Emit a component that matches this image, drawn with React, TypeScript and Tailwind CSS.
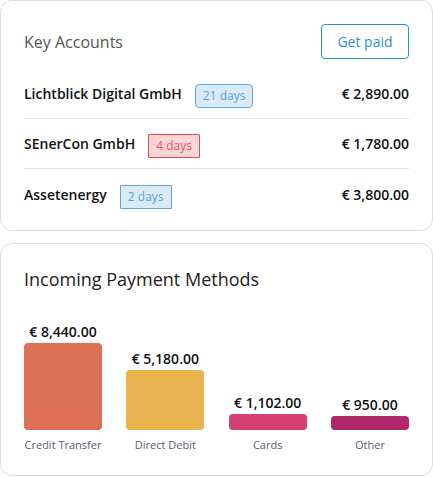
const accounts = [
  { name: "Lichtblick Digital GmbH", days: "21 days", tone: "blue", rounded: true, amount: "€ 2,890.00" },
  { name: "SEnerCon GmbH", days: "4 days", tone: "red", rounded: false, amount: "€ 1,780.00" },
  { name: "Assetenergy", days: "2 days", tone: "blue", rounded: false, amount: "€ 3,800.00" },
];

const methods = [
  { label: "Credit Transfer", amount: "€ 8,440.00", height: 87, color: "bg-[#dd7055]" },
  { label: "Direct Debit", amount: "€ 5,180.00", height: 60, color: "bg-[#ebb350]" },
  { label: "Cards", amount: "€ 1,102.00", height: 16, color: "bg-[#d63f72]" },
  { label: "Other", amount: "€ 950.00", height: 14, color: "bg-[#b0276b]" },
];

function Badge({ text, tone, rounded }: { text: string; tone: string; rounded: boolean }) {
  const toneClass =
    tone === "red"
      ? "bg-[#fdd5d8] border-[#e8474f] text-[#e8545c]"
      : "bg-[#dbeaf7] border-[#5aa8de] text-[#5aa1d8]";
  return (
    <span
      className={`inline-flex h-[24px] items-center border px-[7px] text-[12px] ${toneClass} ${
        rounded ? "rounded-[4px]" : "rounded-[1px]"
      }`}
    >
      {text}
    </span>
  );
}

export default function App() {
  return (
    <div className="w-[433px] bg-white font-['Open_Sans',sans-serif] flex flex-col gap-[12px]">
      {/* Key accounts */}
      <div className="border border-[#dedede] rounded-[12px] px-[23px] pt-[23px] pb-[11px]">
        <div className="flex items-center justify-between h-[35px]">
          <h2 className="text-[16px] text-[#555555]">Key Accounts</h2>
          <button className="h-[35px] w-[88px] border border-[#2a8fd0] rounded-[4px] text-[14px] text-[#2a8fd0]">
            Get paid
          </button>
        </div>
        <div className="mt-[10px]">
          {accounts.map((a, i) => (
            <div
              key={a.name}
              className={`flex items-center justify-between h-[50px] ${
                i < accounts.length - 1 ? "border-b border-[#e4e4e4]" : ""
              }`}
            >
              <div className="flex items-center gap-[13px]">
                <span className="text-[14px] font-semibold text-[#111111]">{a.name}</span>
                <span className="mt-[3px]">
                  <Badge text={a.days} tone={a.tone} rounded={a.rounded} />
                </span>
              </div>
              <span className="text-[14px] font-semibold text-[#111111]">{a.amount}</span>
            </div>
          ))}
        </div>
      </div>

      {/* Incoming payment methods */}
      <div className="border border-[#dedede] rounded-[12px] px-[23px] pt-[22px] pb-[20px]">
        <h2 className="text-[18px] leading-[26px] text-[#222222]">Incoming Payment Methods</h2>
        <div className="mt-[30px] flex items-end justify-between">
          {methods.map((m) => (
            <div key={m.label} className="flex flex-col items-center w-[78px]">
              <span className="text-[14px] leading-[20px] font-semibold text-[#111111] whitespace-nowrap mb-[1px]">
                {m.amount}
              </span>
              <div className={`w-full rounded-[4px] ${m.color}`} style={{ height: m.height }} />
              <span className="mt-[5px] text-[11px] leading-[20px] text-[#5b5b78] whitespace-nowrap">
                {m.label}
              </span>
            </div>
          ))}
        </div>
      </div>
    </div>
  );
}
